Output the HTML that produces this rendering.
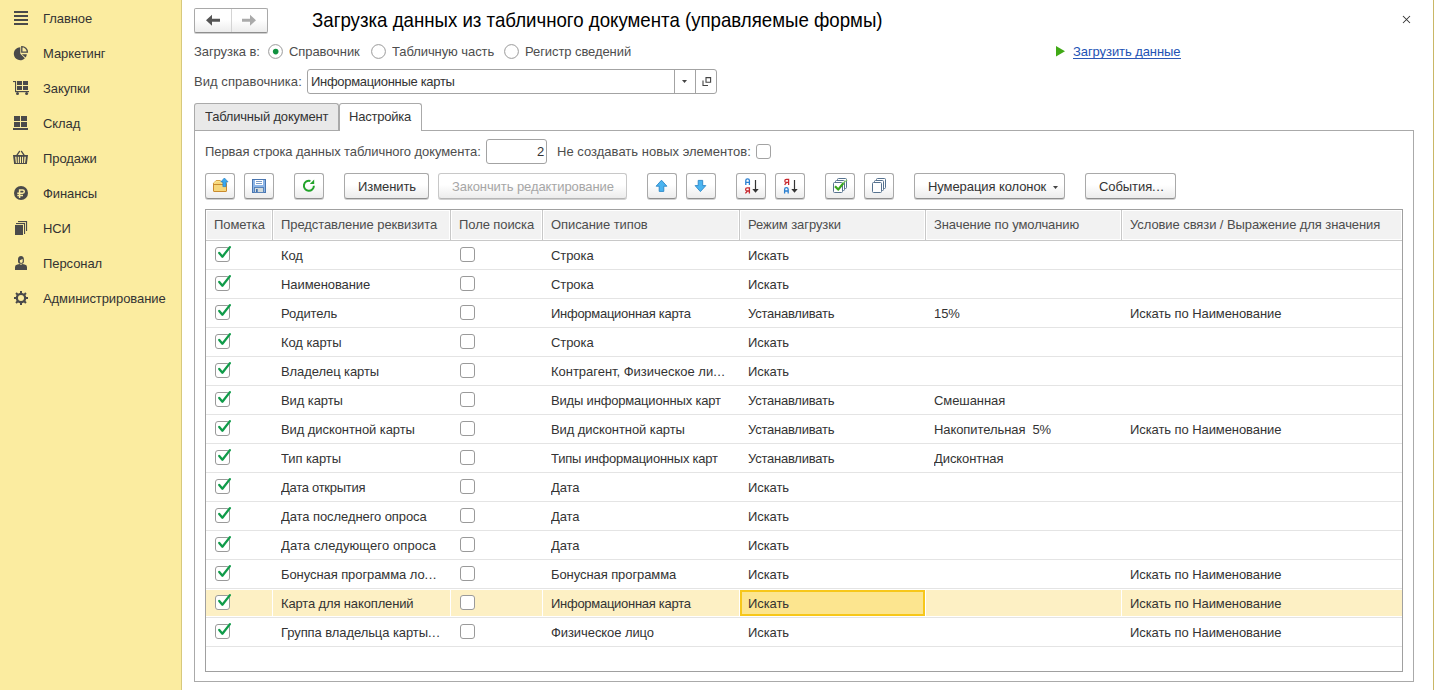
<!DOCTYPE html>
<html><head><meta charset="utf-8"><style>
*{box-sizing:border-box;margin:0;padding:0}
html,body{width:1434px;height:690px;overflow:hidden;background:#fff}
body{position:relative;font-family:"Liberation Sans",sans-serif;font-size:13px;color:#4d4d4d}
.a{position:absolute;white-space:pre;line-height:15px;letter-spacing:-0.08px;transform:scaleY(1.05);transform-origin:0 12px}
#side{position:absolute;left:0;top:0;width:182px;height:690px;background:#fbeca0;border-right:1px solid #d7c97d}
#rb{position:absolute;left:1433px;top:0;width:1px;height:690px;background:#c9b766}
.si{color:#333}
.btn{position:absolute;height:26px;border:1px solid #a9a9a9;border-bottom-color:#8e8e8e;border-radius:3px;background:linear-gradient(#ffffff 0%,#ffffff 45%,#ececec 100%);box-shadow:0 1px 0 #cfcfcf}
.tt{color:#333}
</style></head>
<body>
<div id="side"></div><div id="rb"></div><div class="a" style="left:43px;top:11px;color:#333;">Главное</div><div class="a" style="left:43px;top:46px;color:#333;">Маркетинг</div><div class="a" style="left:43px;top:81px;color:#333;">Закупки</div><div class="a" style="left:43px;top:116px;color:#333;">Склад</div><div class="a" style="left:43px;top:151px;color:#333;">Продажи</div><div class="a" style="left:43px;top:186px;color:#333;">Финансы</div><div class="a" style="left:43px;top:221px;color:#333;">НСИ</div><div class="a" style="left:43px;top:256px;color:#333;">Персонал</div><div class="a" style="left:43px;top:291px;color:#333;">Администрирование</div><svg style="position:absolute;left:0;top:0" width="181" height="320" viewBox="0 0 181 320">
<g fill="#4a4a4a">
<rect x="14" y="11" width="14" height="2"/><rect x="14" y="15" width="14" height="2"/><rect x="14" y="19" width="14" height="2"/><rect x="14" y="23" width="14" height="2"/>
<path d="M20.3 53.7 L20.3 47.2 A6.5 6.5 0 1 0 24.9 58.3 Z"/>
<path d="M21.8 54.2 L26.8 54.2 A6.5 6.5 0 0 1 25.6 57.6 Z"/>
<path d="M21.8 52.2 V46.6 A5.6 5.6 0 0 1 27.4 52.2 Z" fill="none" stroke="#4a4a4a" stroke-width="1.3"/>
<rect x="13" y="81" width="3" height="1.1"/><rect x="15" y="81" width="1.1" height="11"/><rect x="15" y="91" width="14" height="1.2"/>
<rect x="17" y="81" width="5" height="4"/><rect x="23" y="81" width="5" height="4"/><rect x="17" y="86" width="5" height="4"/><rect x="23" y="86" width="5" height="4"/>
<circle cx="17.5" cy="93.4" r="1.5"/><circle cx="26.6" cy="93.4" r="1.5"/>
<rect x="14" y="116" width="6" height="5"/><rect x="21" y="116" width="6" height="5"/><rect x="14" y="122" width="6" height="5"/><rect x="21" y="122" width="6" height="5"/>
<rect x="13" y="128" width="15" height="2"/>
<path d="M13 155 H28 L26.9 164 H14.1 Z"/>
<path d="M16.8 155.3 L19.5 151.4 M21.5 151.4 L24.2 155.3" fill="none" stroke="#4a4a4a" stroke-width="1.3" stroke-linecap="round"/>
<circle cx="21" cy="193" r="7"/>
<rect x="15" y="225" width="8" height="10"/>
<rect x="16" y="223" width="9" height="1.1"/><rect x="24" y="223" width="1.1" height="11"/><rect x="18" y="221" width="9" height="1.1"/><rect x="26" y="221" width="1.1" height="10"/>
<path d="M15 270 V267 Q15 264.8 17.5 264.4 L19.6 264.1 Q21 265.3 22.4 264.1 L24.5 264.4 Q27 264.8 27 267 V270 Z"/>
<path d="M18 259.5 Q18 256 21 256 Q23.9 256 23.9 259.5 V261.5 Q23.9 263.8 21 263.8 Q18 263.8 18 261.5 Z"/>
<path d="M19.8 260.2 Q21.5 259.6 22.7 259 V261.5 Q22.7 262.9 21.2 262.9 Q19.8 262.9 19.8 261.5 Z" fill="#fbeca0"/>
</g>
<g fill="#fbeca0">
<path d="M15.1 156.8 H16.5 L16.9 163 H15.9 Z"/><rect x="17.8" y="156.8" width="1.1" height="6.2"/><rect x="19.9" y="156.8" width="1.1" height="6.2"/><rect x="22" y="156.8" width="1.1" height="6.2"/><path d="M24.4 156.8 H25.9 L25.1 163 H24 Z"/>
</g>
<g fill="none" stroke="#fbeca0" stroke-width="1.5">
<path d="M19.6 198 V189.9 H22.6 A1.7 1.7 0 0 1 22.6 193.3 H17.3 M17.3 195.6 H23"/>
</g>
<g transform="translate(21 298)" fill="#4a4a4a">
<circle r="5.3"/>
<g id="teeth"><rect x="-1" y="-7" width="2" height="3"/><rect x="-1" y="4" width="2" height="3"/><rect x="-7" y="-1" width="3" height="2"/><rect x="4" y="-1" width="3" height="2"/>
<g transform="rotate(45)"><rect x="-1" y="-7" width="2" height="3"/><rect x="-1" y="4" width="2" height="3"/><rect x="-7" y="-1" width="3" height="2"/><rect x="4" y="-1" width="3" height="2"/></g></g>
<circle r="3" fill="#fbeca0"/>
</g>
</svg><div class="btn" style="left:194px;top:8px;width:74px;height:25px;border-radius:2px"></div><div style="position:absolute;left:231px;top:9px;width:1px;height:23px;background:#d4d4d4"></div><svg style="position:absolute;left:194px;top:8px" width="75" height="25">
<path d="M12 12.3 L18 6.8 V10.8 H26 V13.8 H18 V17.8 Z" fill="#555"/>
<path d="M62 12.3 L56 6.8 V10.8 H48 V13.8 H56 V17.8 Z" fill="#aaa"/>
</svg><div class="a" style="left:312px;top:9.63px;font-size:18.67px;line-height:21px;transform:scaleY(1.04);transform-origin:0 16.97px;letter-spacing:0;color:#000;">Загрузка данных из табличного документа (управляемые формы)</div><svg style="position:absolute;left:1402px;top:15px" width="10" height="10"><path d="M1 1 L8 8 M8 1 L1 8" stroke="#333" stroke-width="1.05"/></svg><div class="a" style="left:194px;top:44px;">Загрузка в:</div><svg style="position:absolute;left:267px;top:43px" width="17" height="17"><circle cx="8.5" cy="8.5" r="6.9" fill="#fff" stroke="#9a9a9a" stroke-width="1"/><circle cx="8.7" cy="8.6" r="2.8" fill="#10913f"/></svg><div class="a" style="left:289px;top:44px;">Справочник</div><svg style="position:absolute;left:370px;top:43px" width="17" height="17"><circle cx="8.5" cy="8.5" r="6.9" fill="#fff" stroke="#9a9a9a" stroke-width="1"/></svg><div class="a" style="left:392px;top:44px;">Табличную часть</div><svg style="position:absolute;left:503px;top:43px" width="17" height="17"><circle cx="8.5" cy="8.5" r="6.9" fill="#fff" stroke="#9a9a9a" stroke-width="1"/></svg><div class="a" style="left:525px;top:44px;">Регистр сведений</div><svg style="position:absolute;left:1055px;top:45px" width="12" height="13"><path d="M1 1 L10 6.2 L1 11.5z" fill="#40a915"/></svg><div class="a" style="left:1073px;top:44px;color:#2152b4;">Загрузить данные</div><div style="position:absolute;left:1073px;top:58px;width:108px;height:1px;background:#2b57b5"></div><div class="a" style="left:194px;top:74px;letter-spacing:0.06px;">Вид справочника:</div><div style="position:absolute;left:307px;top:69px;width:410px;height:25px;border:1px solid #a3a3a3;border-radius:3px;background:#fff"></div><div style="position:absolute;left:674px;top:70px;width:1px;height:23px;background:#a3a3a3"></div><div style="position:absolute;left:695px;top:70px;width:1px;height:23px;background:#a3a3a3"></div><div class="a" style="left:311px;top:74px;color:#333;letter-spacing:-0.31px;">Информационные карты</div><svg style="position:absolute;left:682px;top:80px" width="6" height="4"><path d="M0 0 h5 l-2.5 3z" fill="#444"/></svg><svg style="position:absolute;left:700px;top:75px" width="14" height="14"><path d="M6 2.6 h4.6 v4.6 h-4.6z M3 5.5 v5 h5 " fill="none" stroke="#444" stroke-width="1.1"/></svg><div style="position:absolute;left:194px;top:130px;width:1220px;height:552px;border:1px solid #aaa;background:#fff"></div><div style="position:absolute;left:194px;top:103px;width:145px;height:27px;border:1px solid #aaa;border-bottom:none;border-radius:3px 3px 0 0;background:#e9e9e9"></div><div style="position:absolute;left:339px;top:103px;width:83px;height:28px;border:1px solid #aaa;border-bottom:none;border-radius:3px 3px 0 0;background:#fff"></div><div class="a" style="left:205px;top:109px;color:#333;letter-spacing:-0.2px;">Табличный документ</div><div class="a" style="left:349px;top:109px;color:#333;letter-spacing:-0.22px;">Настройка</div><div class="a" style="left:205px;top:144px;">Первая строка данных табличного документа:</div><div style="position:absolute;left:486px;top:139px;width:61px;height:25px;border:1px solid #a3a3a3;border-radius:3px;background:#fff"></div><div class="a" style="left:537px;top:144px;color:#333;">2</div><div class="a" style="left:557px;top:144px;letter-spacing:0.02px;">Не создавать новых элементов:</div><div style="position:absolute;left:756px;top:144px;width:15px;height:15px;border:1px solid #a3a3a3;border-radius:3px;background:#fff"></div><div class="btn" style="left:205px;top:173px;width:30px;"></div><div class="btn" style="left:244px;top:173px;width:30px;"></div><div class="btn" style="left:294px;top:173px;width:30px;"></div><div class="btn" style="left:647px;top:173px;width:30px;"></div><div class="btn" style="left:686px;top:173px;width:30px;"></div><div class="btn" style="left:736px;top:173px;width:30px;"></div><div class="btn" style="left:775px;top:173px;width:30px;"></div><div class="btn" style="left:825px;top:173px;width:30px;"></div><div class="btn" style="left:864px;top:173px;width:30px;"></div><div class="btn" style="left:344px;top:173px;width:85px;"></div><div class="a" style="left:358px;top:179px;color:#333;">Изменить</div><div class="btn" style="left:438px;top:173px;width:189px;border-color:#c8c8c8;border-bottom-color:#b5b5b5;"></div><div class="a" style="left:452px;top:179px;color:#a6a6a6;">Закончить редактирование</div><div class="btn" style="left:914px;top:173px;width:151px;"></div><div class="a" style="left:928px;top:179px;color:#333;">Нумерация колонок</div><div class="btn" style="left:1085px;top:173px;width:91px;"></div><div class="a" style="left:1099px;top:179px;color:#333;">События<span style="letter-spacing:0.5px">...</span></div><svg style="position:absolute;left:1053px;top:186px" width="6" height="4"><path d="M0 0 h5 l-2.5 3z" fill="#444"/></svg><svg style="position:absolute;left:0;top:0" width="1434" height="210">
<path d="M213.5 191 V183.3 L216.2 180.5 H220.2 L222.2 182.5 H226 Q226.5 182.5 226.5 183.3 V191 Q226.5 191.5 226 191.5 H214 Q213.5 191.5 213.5 191 Z" fill="#f6d77c" stroke="#c98a2e"/>
<path d="M214.3 183.2 L216.6 181.3 H219.8 L221.8 183.3 H226" fill="none" stroke="#fde68e" stroke-width="1.3"/>
<path d="M213.8 184.5 H226.2" stroke="#c98a2e" stroke-width="1"/>
<path d="M224.4 178 L228.1 181.9 H226 V186.6 H222.9 V181.9 H220.8 Z" fill="#3aaaf0" stroke="#2a7fc4" stroke-width="0.7" stroke-linejoin="miter"/>
<rect x="252.5" y="179.5" width="13" height="13" fill="#8db6e8" stroke="#4a76b0"/>
<rect x="255" y="180" width="8" height="5" fill="#fff"/>
<rect x="256" y="181" width="6" height="1" fill="#7a9cc8"/><rect x="256" y="183" width="6" height="1" fill="#7a9cc8"/>
<rect x="254.5" y="187.5" width="9" height="5" fill="#d3dbdc" stroke="#5a83b8"/>
<rect x="256" y="189" width="1.7" height="3" fill="#3f6fb0"/>
<path d="M313.9 185.8 A5 5 0 1 1 310.4 181" fill="none" stroke="#22a32a" stroke-width="2"/>
<path d="M309.8 184 L314.2 179.6 V184 Z" fill="#22a32a"/>
<path d="M661.5 180.2 L666.9 186.2 H663.8 V191.4 H659.2 V186.2 H656.1 Z" fill="#4ab4f0" stroke="#2a86c6" stroke-width="0.9" stroke-linejoin="round"/>
<path d="M700.4 191.6 L705.8 185.6 H702.7 V180.4 H698.2 V185.6 H695.1 Z" fill="#4ab4f0" stroke="#2a86c6" stroke-width="0.9" stroke-linejoin="round"/>
<g fill="none" stroke-width="1.3">
<path d="M745.8 185 V180.6 Q745.8 178.8 747.6 178.8 Q749.4 178.8 749.4 180.6 V185 M745.8 182.3 H749.4" stroke="#2a7fd0"/>
<path d="M749.4 193.6 V187.9 H747.2 Q745.6 187.9 745.6 189.5 Q745.6 191 747.2 191 H749.4 M747.4 191 L745.4 193.4" stroke="#c8282e"/>
<path d="M784.7 185 V179.3 H786.9 Q788.5 179.3 788.5 180.9 Q788.5 182.4 786.9 182.4 H784.7" stroke="none"/>
<path d="M788.6 185 V179.3 H786.4 Q784.8 179.3 784.8 180.9 Q784.8 182.4 786.4 182.4 H788.6 M786.6 182.4 L784.6 184.8" stroke="#c8282e"/>
<path d="M784.6 193.6 V189.4 Q784.6 187.6 786.4 187.6 Q788.2 187.6 788.2 189.4 V193.6 M784.6 191 H788.2" stroke="#2a7fd0"/>
</g>
<path d="M755.5 180 V190" stroke="#333" stroke-width="1.2"/><path d="M752.3 189 L755.5 192.8 L758.7 189 Z" fill="#333"/>
<path d="M794.5 180 V190" stroke="#333" stroke-width="1.2"/><path d="M791.3 189 L794.5 192.8 L797.7 189 Z" fill="#333"/>
<g stroke="#56728f" fill="#fff" stroke-width="1">
<rect x="837.5" y="178.5" width="9" height="10" rx="1"/><rect x="835.5" y="180.5" width="9" height="10" rx="1"/><rect x="833.5" y="182.5" width="9" height="10" rx="1"/>
<rect x="876.5" y="178.5" width="9" height="10" rx="1"/><rect x="874.5" y="180.5" width="9" height="10" rx="1"/><rect x="872.5" y="182.5" width="9" height="10" rx="1"/>
</g>
<path d="M845.5 181 L843 183.5 M847 180 L846 181" fill="none" stroke="#7cc36a" stroke-width="1.5"/>
<path d="M835 186.2 L838.2 189.6 L843.3 183.3" fill="none" stroke="#3aa61e" stroke-width="2.2" stroke-linejoin="round"/>
</svg><div style="position:absolute;left:205px;top:209px;width:1198px;height:463px;border:1px solid #a0a0a0;background:#fff"></div><div style="position:absolute;left:206px;top:240px;width:1196px;height:1px;background:#c8c8c8"></div><div style="position:absolute;left:207px;top:211px;width:64px;height:28px;background:#f2f2f2"></div><div class="a" style="left:214px;top:217px;color:#4d4d4d;">Пометка</div><div style="position:absolute;left:274px;top:211px;width:175px;height:28px;background:#f2f2f2"></div><div style="position:absolute;left:272px;top:210px;width:1px;height:30px;background:#c8c8c8"></div><div class="a" style="left:281px;top:217px;color:#4d4d4d;">Представление реквизита</div><div style="position:absolute;left:452px;top:211px;width:89px;height:28px;background:#f2f2f2"></div><div style="position:absolute;left:450px;top:210px;width:1px;height:30px;background:#c8c8c8"></div><div class="a" style="left:459px;top:217px;color:#4d4d4d;">Поле поиска</div><div style="position:absolute;left:544px;top:211px;width:194px;height:28px;background:#f2f2f2"></div><div style="position:absolute;left:542px;top:210px;width:1px;height:30px;background:#c8c8c8"></div><div class="a" style="left:551px;top:217px;color:#4d4d4d;">Описание типов</div><div style="position:absolute;left:741px;top:211px;width:183px;height:28px;background:#f2f2f2"></div><div style="position:absolute;left:739px;top:210px;width:1px;height:30px;background:#c8c8c8"></div><div class="a" style="left:748px;top:217px;color:#4d4d4d;">Режим загрузки</div><div style="position:absolute;left:927px;top:211px;width:193px;height:28px;background:#f2f2f2"></div><div style="position:absolute;left:925px;top:210px;width:1px;height:30px;background:#c8c8c8"></div><div class="a" style="left:934px;top:217px;color:#4d4d4d;">Значение по умолчанию</div><div style="position:absolute;left:1123px;top:211px;width:278px;height:28px;background:#f2f2f2"></div><div style="position:absolute;left:1121px;top:210px;width:1px;height:30px;background:#c8c8c8"></div><div class="a" style="left:1130px;top:217px;color:#4d4d4d;">Условие связи / Выражение для значения</div><div style="position:absolute;left:206px;top:269px;width:1196px;height:1px;background:#e4e4e4"></div><div style="position:absolute;left:215px;top:247px;width:15px;height:15px;border:1px solid #9a9a9a;border-radius:3px;background:#fff"></div><svg style="position:absolute;left:215px;top:245px" width="18" height="16"><path d="M4.25 7.9 L7.4 11.7 L14.9 2.15" fill="none" stroke="#0f9b49" stroke-width="2.3" stroke-linecap="round" stroke-linejoin="round"/></svg><div style="position:absolute;left:460px;top:247px;width:15px;height:15px;border:1px solid #9a9a9a;border-radius:3px;background:#fff"></div><div class="a" style="left:281px;top:248px;color:#333;">Код</div><div class="a" style="left:551px;top:248px;color:#333;">Строка</div><div class="a" style="left:748px;top:248px;color:#333;">Искать</div><div style="position:absolute;left:206px;top:298px;width:1196px;height:1px;background:#e4e4e4"></div><div style="position:absolute;left:215px;top:276px;width:15px;height:15px;border:1px solid #9a9a9a;border-radius:3px;background:#fff"></div><svg style="position:absolute;left:215px;top:274px" width="18" height="16"><path d="M4.25 7.9 L7.4 11.7 L14.9 2.15" fill="none" stroke="#0f9b49" stroke-width="2.3" stroke-linecap="round" stroke-linejoin="round"/></svg><div style="position:absolute;left:460px;top:276px;width:15px;height:15px;border:1px solid #9a9a9a;border-radius:3px;background:#fff"></div><div class="a" style="left:281px;top:277px;color:#333;">Наименование</div><div class="a" style="left:551px;top:277px;color:#333;">Строка</div><div class="a" style="left:748px;top:277px;color:#333;">Искать</div><div style="position:absolute;left:206px;top:327px;width:1196px;height:1px;background:#e4e4e4"></div><div style="position:absolute;left:215px;top:305px;width:15px;height:15px;border:1px solid #9a9a9a;border-radius:3px;background:#fff"></div><svg style="position:absolute;left:215px;top:303px" width="18" height="16"><path d="M4.25 7.9 L7.4 11.7 L14.9 2.15" fill="none" stroke="#0f9b49" stroke-width="2.3" stroke-linecap="round" stroke-linejoin="round"/></svg><div style="position:absolute;left:460px;top:305px;width:15px;height:15px;border:1px solid #9a9a9a;border-radius:3px;background:#fff"></div><div class="a" style="left:281px;top:306px;color:#333;">Родитель</div><div class="a" style="left:551px;top:306px;color:#333;letter-spacing:-0.28px;">Информационная карта</div><div class="a" style="left:748px;top:306px;color:#333;letter-spacing:-0.23px;">Устанавливать</div><div class="a" style="left:934px;top:306px;color:#333;">15%</div><div class="a" style="left:1130px;top:306px;color:#333;">Искать по Наименование</div><div style="position:absolute;left:206px;top:356px;width:1196px;height:1px;background:#e4e4e4"></div><div style="position:absolute;left:215px;top:334px;width:15px;height:15px;border:1px solid #9a9a9a;border-radius:3px;background:#fff"></div><svg style="position:absolute;left:215px;top:332px" width="18" height="16"><path d="M4.25 7.9 L7.4 11.7 L14.9 2.15" fill="none" stroke="#0f9b49" stroke-width="2.3" stroke-linecap="round" stroke-linejoin="round"/></svg><div style="position:absolute;left:460px;top:334px;width:15px;height:15px;border:1px solid #9a9a9a;border-radius:3px;background:#fff"></div><div class="a" style="left:281px;top:335px;color:#333;">Код карты</div><div class="a" style="left:551px;top:335px;color:#333;">Строка</div><div class="a" style="left:748px;top:335px;color:#333;">Искать</div><div style="position:absolute;left:206px;top:385px;width:1196px;height:1px;background:#e4e4e4"></div><div style="position:absolute;left:215px;top:363px;width:15px;height:15px;border:1px solid #9a9a9a;border-radius:3px;background:#fff"></div><svg style="position:absolute;left:215px;top:361px" width="18" height="16"><path d="M4.25 7.9 L7.4 11.7 L14.9 2.15" fill="none" stroke="#0f9b49" stroke-width="2.3" stroke-linecap="round" stroke-linejoin="round"/></svg><div style="position:absolute;left:460px;top:363px;width:15px;height:15px;border:1px solid #9a9a9a;border-radius:3px;background:#fff"></div><div class="a" style="left:281px;top:364px;color:#333;">Владелец карты</div><div class="a" style="left:551px;top:364px;color:#333;letter-spacing:-0.02px;">Контрагент, Физическое ли<span style="letter-spacing:0.5px">...</span></div><div class="a" style="left:748px;top:364px;color:#333;">Искать</div><div style="position:absolute;left:206px;top:414px;width:1196px;height:1px;background:#e4e4e4"></div><div style="position:absolute;left:215px;top:392px;width:15px;height:15px;border:1px solid #9a9a9a;border-radius:3px;background:#fff"></div><svg style="position:absolute;left:215px;top:390px" width="18" height="16"><path d="M4.25 7.9 L7.4 11.7 L14.9 2.15" fill="none" stroke="#0f9b49" stroke-width="2.3" stroke-linecap="round" stroke-linejoin="round"/></svg><div style="position:absolute;left:460px;top:392px;width:15px;height:15px;border:1px solid #9a9a9a;border-radius:3px;background:#fff"></div><div class="a" style="left:281px;top:393px;color:#333;">Вид карты</div><div class="a" style="left:551px;top:393px;color:#333;letter-spacing:-0.18px;">Виды информационных карт</div><div class="a" style="left:748px;top:393px;color:#333;letter-spacing:-0.23px;">Устанавливать</div><div class="a" style="left:934px;top:393px;color:#333;">Смешанная</div><div style="position:absolute;left:206px;top:443px;width:1196px;height:1px;background:#e4e4e4"></div><div style="position:absolute;left:215px;top:421px;width:15px;height:15px;border:1px solid #9a9a9a;border-radius:3px;background:#fff"></div><svg style="position:absolute;left:215px;top:419px" width="18" height="16"><path d="M4.25 7.9 L7.4 11.7 L14.9 2.15" fill="none" stroke="#0f9b49" stroke-width="2.3" stroke-linecap="round" stroke-linejoin="round"/></svg><div style="position:absolute;left:460px;top:421px;width:15px;height:15px;border:1px solid #9a9a9a;border-radius:3px;background:#fff"></div><div class="a" style="left:281px;top:422px;color:#333;">Вид дисконтной карты</div><div class="a" style="left:551px;top:422px;color:#333;">Вид дисконтной карты</div><div class="a" style="left:748px;top:422px;color:#333;letter-spacing:-0.23px;">Устанавливать</div><div class="a" style="left:934px;top:422px;color:#333;">Накопительная  5%</div><div class="a" style="left:1130px;top:422px;color:#333;">Искать по Наименование</div><div style="position:absolute;left:206px;top:472px;width:1196px;height:1px;background:#e4e4e4"></div><div style="position:absolute;left:215px;top:450px;width:15px;height:15px;border:1px solid #9a9a9a;border-radius:3px;background:#fff"></div><svg style="position:absolute;left:215px;top:448px" width="18" height="16"><path d="M4.25 7.9 L7.4 11.7 L14.9 2.15" fill="none" stroke="#0f9b49" stroke-width="2.3" stroke-linecap="round" stroke-linejoin="round"/></svg><div style="position:absolute;left:460px;top:450px;width:15px;height:15px;border:1px solid #9a9a9a;border-radius:3px;background:#fff"></div><div class="a" style="left:281px;top:451px;color:#333;">Тип карты</div><div class="a" style="left:551px;top:451px;color:#333;letter-spacing:-0.23px;">Типы информационных карт</div><div class="a" style="left:748px;top:451px;color:#333;letter-spacing:-0.23px;">Устанавливать</div><div class="a" style="left:934px;top:451px;color:#333;">Дисконтная</div><div style="position:absolute;left:206px;top:501px;width:1196px;height:1px;background:#e4e4e4"></div><div style="position:absolute;left:215px;top:479px;width:15px;height:15px;border:1px solid #9a9a9a;border-radius:3px;background:#fff"></div><svg style="position:absolute;left:215px;top:477px" width="18" height="16"><path d="M4.25 7.9 L7.4 11.7 L14.9 2.15" fill="none" stroke="#0f9b49" stroke-width="2.3" stroke-linecap="round" stroke-linejoin="round"/></svg><div style="position:absolute;left:460px;top:479px;width:15px;height:15px;border:1px solid #9a9a9a;border-radius:3px;background:#fff"></div><div class="a" style="left:281px;top:480px;color:#333;letter-spacing:-0.28px;">Дата открытия</div><div class="a" style="left:551px;top:480px;color:#333;">Дата</div><div class="a" style="left:748px;top:480px;color:#333;">Искать</div><div style="position:absolute;left:206px;top:530px;width:1196px;height:1px;background:#e4e4e4"></div><div style="position:absolute;left:215px;top:508px;width:15px;height:15px;border:1px solid #9a9a9a;border-radius:3px;background:#fff"></div><svg style="position:absolute;left:215px;top:506px" width="18" height="16"><path d="M4.25 7.9 L7.4 11.7 L14.9 2.15" fill="none" stroke="#0f9b49" stroke-width="2.3" stroke-linecap="round" stroke-linejoin="round"/></svg><div style="position:absolute;left:460px;top:508px;width:15px;height:15px;border:1px solid #9a9a9a;border-radius:3px;background:#fff"></div><div class="a" style="left:281px;top:509px;color:#333;">Дата последнего опроса</div><div class="a" style="left:551px;top:509px;color:#333;">Дата</div><div class="a" style="left:748px;top:509px;color:#333;">Искать</div><div style="position:absolute;left:206px;top:559px;width:1196px;height:1px;background:#e4e4e4"></div><div style="position:absolute;left:215px;top:537px;width:15px;height:15px;border:1px solid #9a9a9a;border-radius:3px;background:#fff"></div><svg style="position:absolute;left:215px;top:535px" width="18" height="16"><path d="M4.25 7.9 L7.4 11.7 L14.9 2.15" fill="none" stroke="#0f9b49" stroke-width="2.3" stroke-linecap="round" stroke-linejoin="round"/></svg><div style="position:absolute;left:460px;top:537px;width:15px;height:15px;border:1px solid #9a9a9a;border-radius:3px;background:#fff"></div><div class="a" style="left:281px;top:538px;color:#333;letter-spacing:0.1px;">Дата следующего опроса</div><div class="a" style="left:551px;top:538px;color:#333;">Дата</div><div class="a" style="left:748px;top:538px;color:#333;">Искать</div><div style="position:absolute;left:206px;top:588px;width:1196px;height:1px;background:#e4e4e4"></div><div style="position:absolute;left:215px;top:566px;width:15px;height:15px;border:1px solid #9a9a9a;border-radius:3px;background:#fff"></div><svg style="position:absolute;left:215px;top:564px" width="18" height="16"><path d="M4.25 7.9 L7.4 11.7 L14.9 2.15" fill="none" stroke="#0f9b49" stroke-width="2.3" stroke-linecap="round" stroke-linejoin="round"/></svg><div style="position:absolute;left:460px;top:566px;width:15px;height:15px;border:1px solid #9a9a9a;border-radius:3px;background:#fff"></div><div class="a" style="left:281px;top:567px;color:#333;">Бонусная программа ло<span style="letter-spacing:0.5px">...</span></div><div class="a" style="left:551px;top:567px;color:#333;">Бонусная программа</div><div class="a" style="left:748px;top:567px;color:#333;">Искать</div><div class="a" style="left:1130px;top:567px;color:#333;">Искать по Наименование</div><div style="position:absolute;left:206px;top:590px;width:1196px;height:26px;background:#fdf0c4"></div><div style="position:absolute;left:272px;top:590px;width:1px;height:26px;background:#fff"></div><div style="position:absolute;left:450px;top:590px;width:1px;height:26px;background:#fff"></div><div style="position:absolute;left:542px;top:590px;width:1px;height:26px;background:#fff"></div><div style="position:absolute;left:739px;top:590px;width:1px;height:26px;background:#fff"></div><div style="position:absolute;left:925px;top:590px;width:1px;height:26px;background:#fff"></div><div style="position:absolute;left:1121px;top:590px;width:1px;height:26px;background:#fff"></div><div style="position:absolute;left:740px;top:590px;width:185px;height:26px;background:#fce58f;border:2px solid #f7c71a"></div><div style="position:absolute;left:206px;top:617px;width:1196px;height:1px;background:#e4e4e4"></div><div style="position:absolute;left:215px;top:595px;width:15px;height:15px;border:1px solid #9a9a9a;border-radius:3px;background:#fff"></div><svg style="position:absolute;left:215px;top:593px" width="18" height="16"><path d="M4.25 7.9 L7.4 11.7 L14.9 2.15" fill="none" stroke="#0f9b49" stroke-width="2.3" stroke-linecap="round" stroke-linejoin="round"/></svg><div style="position:absolute;left:460px;top:595px;width:15px;height:15px;border:1px solid #9a9a9a;border-radius:3px;background:#fff"></div><div class="a" style="left:281px;top:596px;color:#333;letter-spacing:-0.14px;">Карта для накоплений</div><div class="a" style="left:551px;top:596px;color:#333;letter-spacing:-0.28px;">Информационная карта</div><div class="a" style="left:748px;top:596px;color:#333;">Искать</div><div class="a" style="left:1130px;top:596px;color:#333;">Искать по Наименование</div><div style="position:absolute;left:206px;top:646px;width:1196px;height:1px;background:#e4e4e4"></div><div style="position:absolute;left:215px;top:624px;width:15px;height:15px;border:1px solid #9a9a9a;border-radius:3px;background:#fff"></div><svg style="position:absolute;left:215px;top:622px" width="18" height="16"><path d="M4.25 7.9 L7.4 11.7 L14.9 2.15" fill="none" stroke="#0f9b49" stroke-width="2.3" stroke-linecap="round" stroke-linejoin="round"/></svg><div style="position:absolute;left:460px;top:624px;width:15px;height:15px;border:1px solid #9a9a9a;border-radius:3px;background:#fff"></div><div class="a" style="left:281px;top:625px;color:#333;">Группа владельца карты<span style="letter-spacing:0.5px">...</span></div><div class="a" style="left:551px;top:625px;color:#333;">Физическое лицо</div><div class="a" style="left:748px;top:625px;color:#333;">Искать</div><div class="a" style="left:1130px;top:625px;color:#333;">Искать по Наименование</div>
</body></html>
